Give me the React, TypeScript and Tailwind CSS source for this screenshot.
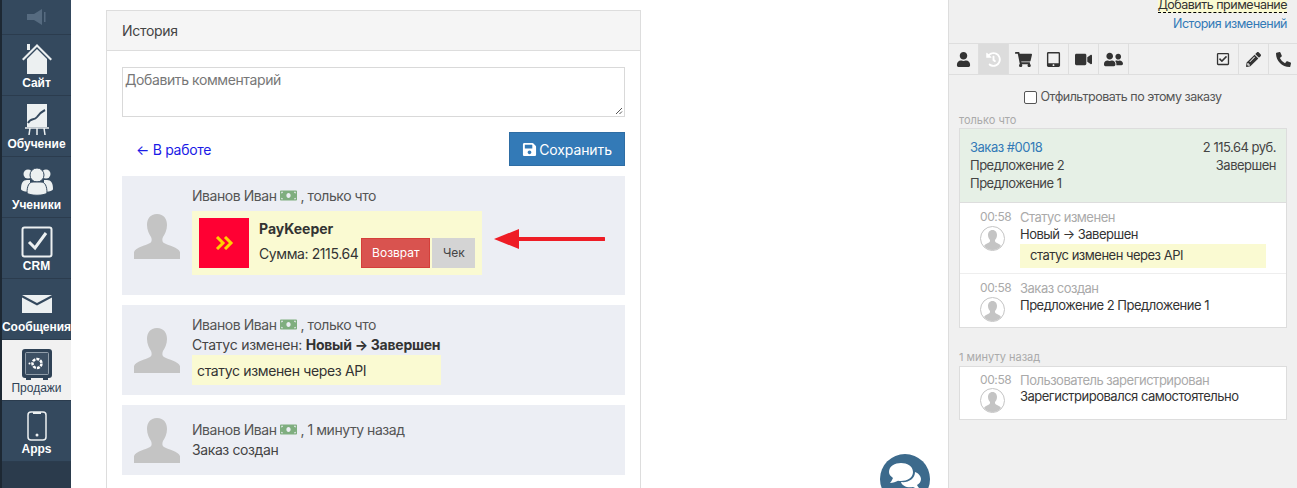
import React from "react";
import { FaUser, FaHistory, FaShoppingCart, FaTabletAlt, FaVideo, FaUserFriends, FaPencilAlt, FaPhoneAlt, FaSave, FaRegCheckSquare, FaMoneyBill } from "react-icons/fa";

const Sans = "font-['Inter','Liberation_Sans',sans-serif]";

function Nav({ label, icon, active, h = "h-[61px]" }: { label: string; icon: React.ReactNode; active?: boolean; h?: string }) {
  return (
    <div className={`${h} flex flex-col items-center border-b border-[#2b3c4e] font-['Liberation_Sans',sans-serif] text-[12px] leading-[14px] ${active ? "bg-[#f1f1f1] text-[#2f4256] font-normal" : "font-bold text-white bg-[#34495e]"}`}>
      <div className="h-[41px] flex items-end justify-center pb-[1px] shrink-0">{icon}</div>
      <div className="whitespace-nowrap">{label}</div>
    </div>
  );
}

const Home = () => (
  <svg width="32" height="32" viewBox="0 0 32 32" fill="#ecf0f1">
    <path d="M1 16 16 1l15 15-1.500 1.500L16 4 2.500 17.500z" />
    <path d="M6 16 16 6l10 10v15H6z" />
    <rect x="6" y="1" width="3" height="6" />
  </svg>
);
const Board = () => (
  <svg width="24" height="32" viewBox="0 0 24 32" fill="none">
    <rect x="2" y="0" width="20" height="23" fill="#ecf0f1" />
    <path d="M3 19c3-6 6-2 9-6 2-3 4-5 8-7" stroke="#34495e" strokeWidth="2" />
    <path d="M0 24h24M5 24l-1 7M12 24v7M19 24l1 7" stroke="#ecf0f1" strokeWidth="1.500" />
  </svg>
);
const Group = () => (
  <svg width="34" height="30" viewBox="0 0 34 30" fill="#ecf0f1">
    <circle cx="8" cy="7" r="4.500" />
    <circle cx="26" cy="7" r="4.500" />
    <path d="M1 22c0-6 2-9 6-9h3v12c-4 0-9-1-9-3zM33 22c0-6-2-9-6-9h-3v12c4 0 9-1 9-3z" />
    <circle cx="17" cy="8" r="7" stroke="#34495e" strokeWidth="1" />
    <path d="M7 26c0-7 2-11 6-11h8c4 0 6 4 6 11-3 3-17 3-20 0z" stroke="#34495e" strokeWidth="1" />
  </svg>
);
const Check = () => (
  <svg width="32" height="32" viewBox="0 0 32 32" fill="none">
    <rect x="1.500" y="1.500" width="29" height="29" rx="2" stroke="#ecf0f1" strokeWidth="2" />
    <path d="M8 16l6 6L25 7" stroke="#ecf0f1" strokeWidth="3" />
  </svg>
);
const Mail = () => (
  <svg width="30" height="18" viewBox="0 0 30 18" fill="#ecf0f1">
    <path d="M0 0 15 8 30 0z" />
    <path d="M0 2.500 15 10.500 30 2.500V18H0z" />
  </svg>
);
const Safe = () => (
  <svg width="30" height="31" viewBox="0 0 30 31" fill="none">
    <rect x="0" y="0" width="30" height="29" rx="3" fill="#2f4256" />
    <rect x="4" y="29" width="5" height="2" fill="#2f4256" />
    <rect x="21" y="29" width="5" height="2" fill="#2f4256" />
    <rect x="3.500" y="3.500" width="23" height="22" rx="1" fill="#3d5064" stroke="#aab4be" strokeWidth="0.800" />
    <circle cx="15" cy="14.500" r="4.500" stroke="#fff" strokeWidth="2.500" strokeDasharray="3 1" />
    <circle cx="7.500" cy="14.500" r="1" fill="#fff" />
  </svg>
);
const Phone = () => (
  <svg width="20" height="30" viewBox="0 0 20 30" fill="none">
    <rect x="1" y="1" width="18" height="28" rx="3" stroke="#ecf0f1" strokeWidth="1.500" />
    <rect x="6" y="1" width="8" height="2" fill="#ecf0f1" />
    <circle cx="10" cy="24" r="1.500" fill="#ecf0f1" />
  </svg>
);

const Avatar = () => (
  <svg width="46" height="45" viewBox="0 0 46 45" fill="#c4c4c4" className="shrink-0">
    <path d="M23 0c7 0 10 5 10 11 0 5-2 9-4 12-1 2-1 5 1 6 5 3 14 4 16 9v7H0v-7c2-5 11-6 16-9 2-1 2-4 1-6-2-3-4-7-4-12C13 5 16 0 23 0z" />
  </svg>
);
const RoundAvatar = () => (
  <svg width="25" height="25" viewBox="0 0 25 25" className="shrink-0">
    <circle cx="12.500" cy="12.500" r="12" fill="#fff" stroke="#c4c4c4" />
    <path d="M12.500 4c3 0 4.500 2.500 4.500 5 0 2-1 4-2 5 0 1 0 2 1 2.500 2 1 4 1.500 5 3.500a11 11 0 0 1-17 0c1-2 3-2.500 5-3.500 1-.5 1-1.500 1-2.500-1-1-2-3-2-5 0-2.500 1.500-5 4.500-5z" fill="#c4c4c4" />
  </svg>
);
const Money = () => <FaMoneyBill className="inline text-[#7fae7f] text-[17px] align-[-3px]" />;

function Byline({ when }: { when: string }) {
  return (
    <div className="text-[14px] leading-[20px] text-[#555] tracking-[-0.45px] whitespace-nowrap">
      Иванов Иван <Money /> , {when}
    </div>
  );
}

const Tab = ({ children, active }: { children: React.ReactNode; active?: boolean }) => (
  <div className={`w-[30px] h-[30px] flex items-center justify-center border-r border-[#dedede] text-[15px] ${active ? "bg-[#dcdcdc] text-white" : "text-[#333]"}`}>{children}</div>
);

function Row({ time, title, children, last, tight }: { time: string; title: string; children: React.ReactNode; last?: boolean; tight?: boolean }) {
  return (
    <div className={`flex pl-[20px] pr-[20px] ${tight ? "pt-[5px]" : "pt-[6px]"} ${last ? "" : "border-b border-[#eeeeee]"}`}>
      <div className="w-[40px] shrink-0 flex flex-col items-start">
        <div className={`text-[12px] leading-[16px] text-[#aaa] tracking-[-0.4px] ${tight ? "h-[16px]" : "h-[17px]"}`}>{time}</div>
        <RoundAvatar />
      </div>
      <div className="flex-1 min-w-0 tracking-[-0.5px]">
        <div className={`text-[13px] leading-[16px] text-[#aaa] ${tight ? "h-[16px]" : "h-[17px]"}`}>{title}</div>
        {children}
      </div>
    </div>
  );
}

export default function App() {
  return (
    <div className={`${Sans} w-[1297px] h-[488px] overflow-hidden flex bg-white text-[#333]`}>
      <aside className="w-[71px] shrink-0 bg-[#2b3b4c] border-l-2 border-[#1d2833] flex flex-col">
        <div className="h-[35px] bg-[#34495e] border-b border-[#2b3c4e] flex items-center justify-center">
          <svg width="22" height="16" viewBox="0 0 22 16" fill="#566b80">
            <path d="M1 5h7l8-5v16l-8-5H1z" />
            <rect x="18" y="3" width="1.500" height="10" />
          </svg>
        </div>
        <Nav label="Сайт" icon={<Home />} />
        <Nav label="Обучение" icon={<Board />} />
        <Nav label="Ученики" icon={<Group />} />
        <Nav label="CRM" icon={<Check />} />
        <Nav label="Сообщения" icon={<div className="pb-[6px]"><Mail /></div>} />
        <Nav label="Продажи" icon={<Safe />} active />
        <Nav label="Apps" icon={<Phone />} />
      </aside>

      <main className="w-[877px] shrink-0 relative pl-[35px] pt-[10px]">
        <section className="w-[535px] h-[600px] border border-[#dddddd]">
          <div className="h-[40px] bg-[#f5f5f5] border-b border-[#dddddd] pl-[15px] flex items-center text-[14px] text-[#444] tracking-[-0.3px]">История</div>
          <div className="px-[15px] pt-[16px]">
            <div className="h-[50px] border border-[#d9d9d9] px-[2px] py-[2px] text-[14px] leading-[20px] text-[#777] relative tracking-[-0.4px]">
              Добавить комментарий
              <svg width="8" height="8" viewBox="0 0 8 8" className="absolute right-[1px] bottom-[1px]" stroke="#555">
                <path d="M1 7 7 1M4.500 7 7 4.500" />
              </svg>
            </div>
            <div className="flex items-center justify-between h-[34px] mt-[15px] pl-[14px]">
              <span className="text-[14px] text-[#1a1ae6] tracking-[-0.3px]">← В работе</span>
              <button className="w-[116px] h-[34px] bg-[#337ab7] border border-[#2e6da4] text-white text-[14px] tracking-[-0.1px] flex items-center justify-center gap-[2px]">
                <FaSave className="text-[15px]" /> Сохранить
              </button>
            </div>

            <div className="h-[119px] mt-[10px] bg-[#eceef4] flex pl-[12px] pt-[10px] relative">
              <div className="w-[58px] pt-[28px]"><Avatar /></div>
              <div>
                <Byline when="только что" />
                <div className="w-[290px] h-[64px] mt-[5px] bg-[#fafad2] flex p-[7px]">
                  <div className="w-[50px] h-[50px] bg-[#ff0033] flex items-center justify-center shrink-0">
                    <svg width="19" height="14" viewBox="0 0 19 14" fill="none" stroke="#ffd000" strokeWidth="3">
                      <path d="M2 1l6 6-6 6M10 1l6 6-6 6" />
                    </svg>
                  </div>
                  <div className="ml-[10px] flex-1">
                    <div className="text-[14px] leading-[20px] font-bold text-[#333] mt-[1px]">PayKeeper</div>
                    <div className="flex items-center -mt-[1px] text-[14px] whitespace-nowrap">
                      <span className="tracking-[-0.4px]">Сумма: 2115.64</span>
                      <span className="ml-[3px] w-[69px] h-[30px] bg-[#d9534f] border border-[#d43f3a] text-white text-[12px] flex items-center justify-center">Возврат</span>
                      <span className="ml-[2px] w-[43px] h-[30px] bg-[#d4d4d4] text-[#444] text-[12px] flex items-center justify-center">Чек</span>
                    </div>
                  </div>
                </div>
              </div>
              <svg width="112" height="22" viewBox="0 0 112 22" className="absolute left-[371px] top-[52px]">
                <path d="M1 11 26 1v20z" fill="#ee1c25" />
                <path d="M25 11h86" stroke="#ee1c25" strokeWidth="4" strokeLinecap="round" />
              </svg>
            </div>

            <div className="h-[90px] mt-[10px] bg-[#eceef4] flex pl-[12px] pt-[10px]">
              <div className="w-[58px] pt-[13px]"><Avatar /></div>
              <div>
                <Byline when="только что" />
                <div className="text-[14px] leading-[20px] text-[#444] tracking-[-0.25px]">Статус изменен: <b className="text-[#333]">Новый → Завершен</b></div>
                <div className="w-[249px] h-[30px] bg-[#fafad2] pl-[5px] flex items-center text-[14px] text-[#333] tracking-[-0.35px]">статус изменен через API</div>
              </div>
            </div>

            <div className="h-[70px] mt-[10px] bg-[#eceef4] flex pl-[12px] pt-[15px]">
              <div className="w-[58px] -mt-[2px]"><Avatar /></div>
              <div>
                <Byline when="1 минуту назад" />
                <div className="text-[14px] leading-[20px] text-[#444] tracking-[-0.4px]">Заказ создан</div>
              </div>
            </div>
          </div>
        </section>
        <div className="absolute left-[809px] top-[454px] w-[50px] h-[50px] rounded-full bg-[#3c6a8c] flex items-start justify-center pt-[9px]">
          <svg width="34" height="28" viewBox="0 0 34 28" fill="#fff">
            <path d="M13 0c6 0 12 3 12 9s-6 9-12 9c-1 0-2 0-3-.2C8 19 5 20 2 20c1-1 2-3 3-5C3 13.500 1 12 1 9c0-6 6-9 12-9z" />
            <path d="M27 9c3 1 6 4 6 7 0 3-2 5-4 6 1 2 2 3 3 4-3 0-5-1-7-2-6 1-11-1-12-5 7 1 14-3 14-10z" />
          </svg>
        </div>
      </main>

      <aside className="flex-1 bg-[#f0f0f0] border-l border-[#dddddd] relative">
        <div className="h-[44px] border-b border-[#dedede] pr-[10px] flex flex-col items-end text-[12.500px] leading-[17px] tracking-[-0.5px]">
          <span className="-mt-[4px] h-[17px] text-[#333] bg-[#fafad2] border-b border-dashed border-black">Добавить примечание</span>
          <span className="mt-[2px] text-[#337ab7]">История изменений</span>
        </div>
        <div className="h-[31px] border-b border-[#dedede] flex">
          <Tab><FaUser /></Tab>
          <Tab active><FaHistory /></Tab>
          <Tab><FaShoppingCart className="text-[17px]" /></Tab>
          <Tab><FaTabletAlt /></Tab>
          <Tab><FaVideo className="text-[17px]" /></Tab>
          <Tab><FaUserFriends className="text-[19px]" /></Tab>
          <div className="flex-1 border-r border-[#dedede] flex items-center justify-end pr-[8px] text-[14px]"><FaRegCheckSquare /></div>
          <Tab><FaPencilAlt /></Tab>
          <div className="w-[28px] flex items-center justify-center text-[15px]"><FaPhoneAlt /></div>
        </div>
        <div className="flex items-center justify-center h-[20px] mt-[12px] text-[12.500px] text-[#555] tracking-[-0.5px]">
          <span className="w-[13px] h-[13px] bg-white border border-[#555] rounded-[2px] mr-[3px]" />
          Отфильтровать по этому заказу
        </div>
        <div className="mt-[6px] pl-[10px] text-[11px] leading-[14px] text-[#aaa]">только что</div>
        <div className="ml-[10px] w-[328px] mt-[1px] border border-[#dddddd] bg-white">
          <div className="h-[74px] bg-[#e6f0e6] border-b border-[#dddddd] px-[10px] pt-[9px] flex justify-between text-[13px] leading-[18px] text-[#444] tracking-[-0.5px]">
            <div>
              <div className="text-[#337ab7]">Заказ #0018</div>
              <div>Предложение 2</div>
              <div>Предложение 1</div>
            </div>
            <div className="text-right">
              <div>2 115.64 руб.</div>
              <div>Завершен</div>
            </div>
          </div>
          <Row time="00:58" title="Статус изменен">
            <div className="text-[13px] leading-[17px] text-[#333]">Новый → Завершен</div>
            <div className="mt-[1px] h-[24px] bg-[#fafad2] pl-[10px] flex items-center text-[13px] text-[#333] mb-[5px]">статус изменен через API</div>
          </Row>
          <Row time="00:58" title="Заказ создан" last>
            <div className="text-[13px] leading-[17px] text-[#333] pb-[13px]">Предложение 2 Предложение 1</div>
          </Row>
        </div>
        <div className="mt-[22px] pl-[10px] text-[11px] leading-[14px] text-[#aaa]">1 минуту назад</div>
        <div className="ml-[10px] w-[328px] mt-[2px] border border-[#dddddd] bg-white">
          <Row time="00:58" title="Пользователь зарегистрирован" last tight>
            <div className="text-[13px] leading-[17px] text-[#333] pb-[14px]">Зарегистрировался самостоятельно</div>
          </Row>
        </div>
      </aside>
    </div>
  );
}
